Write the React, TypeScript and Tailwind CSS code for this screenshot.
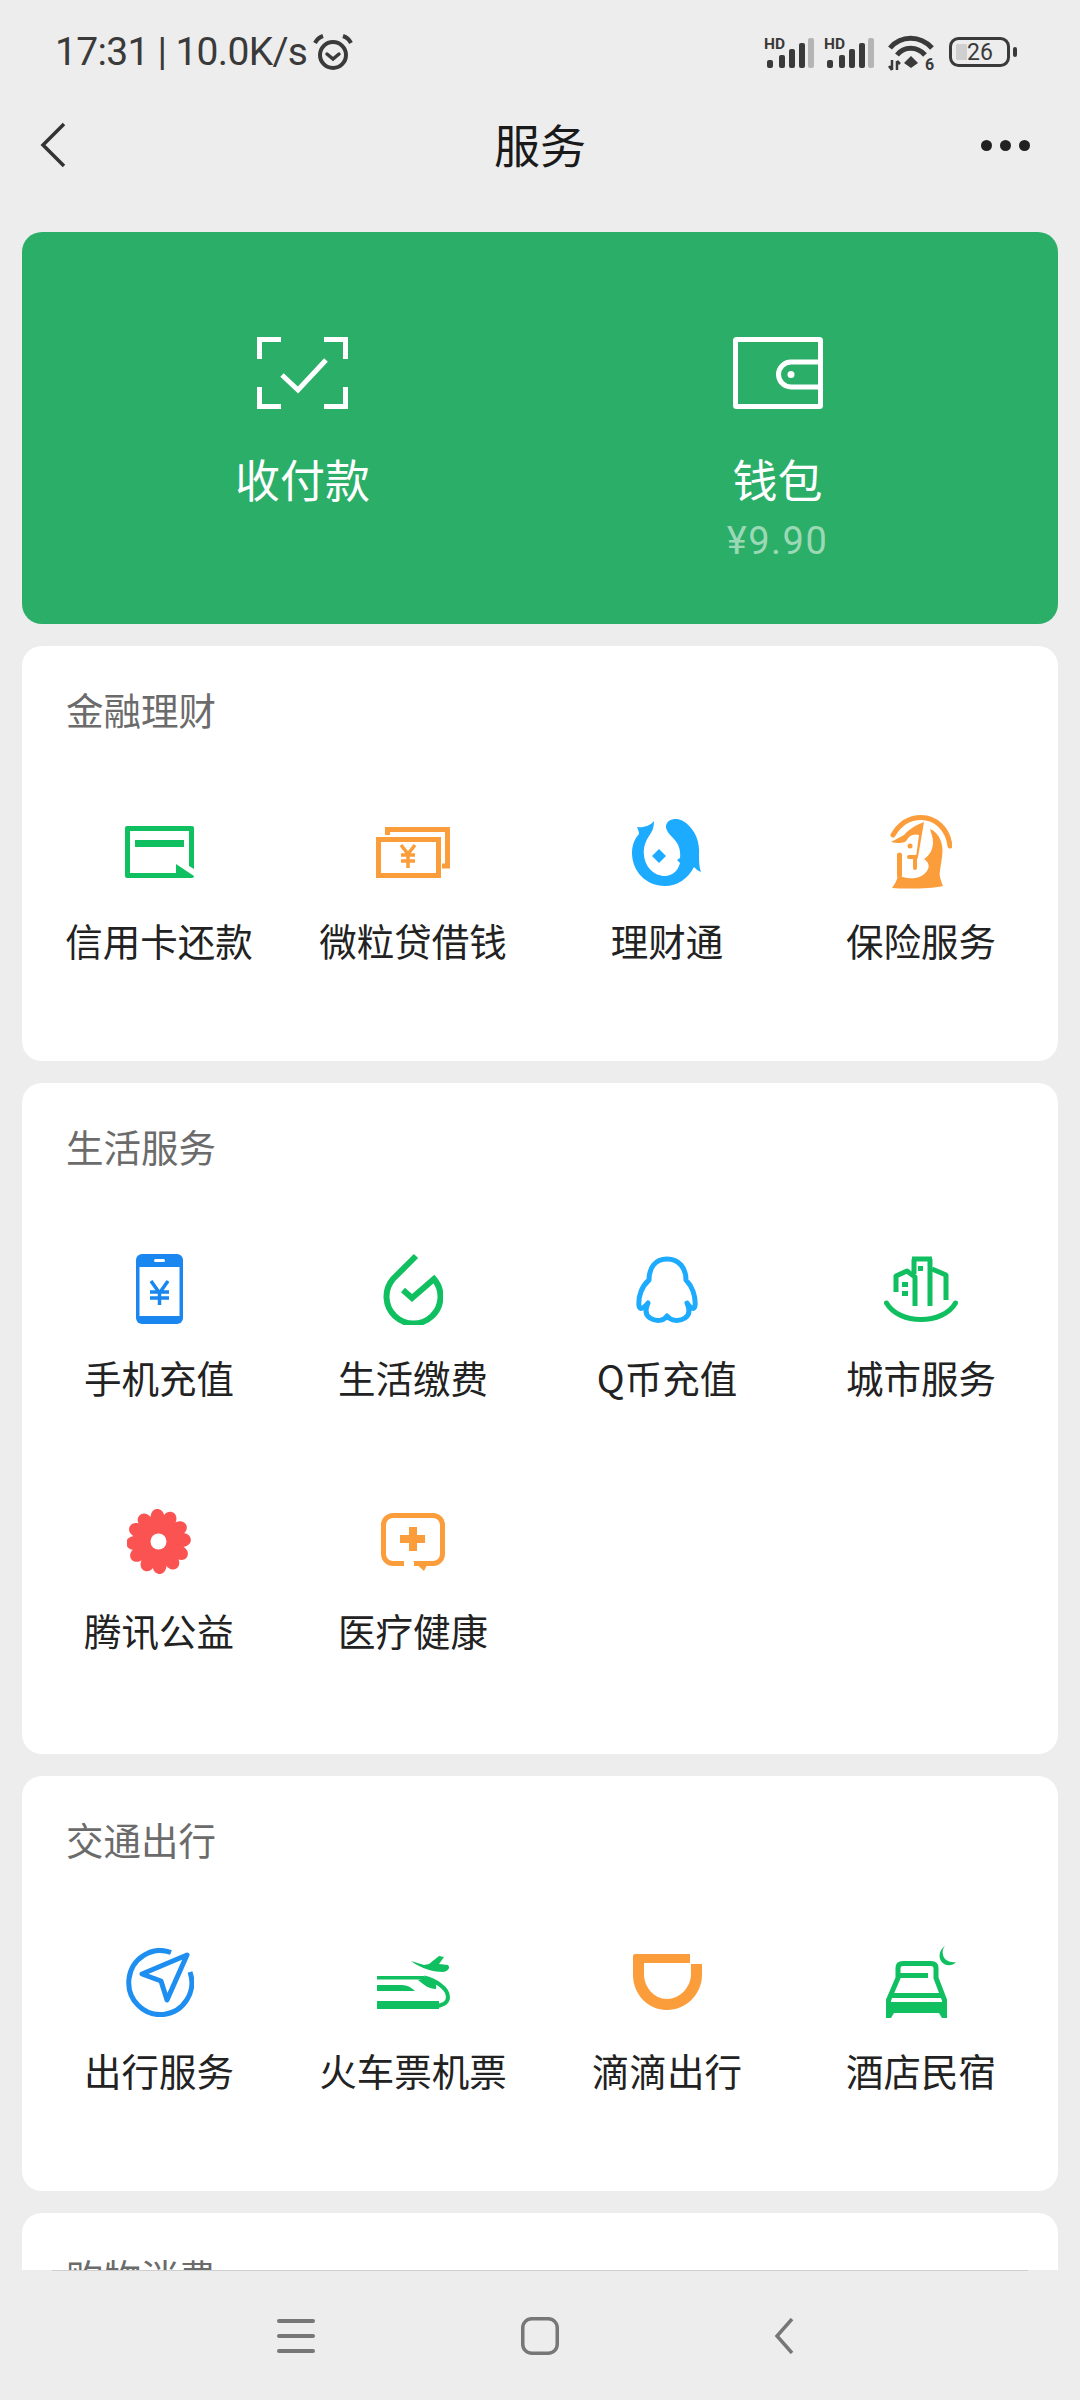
import React from 'react';

const GREEN = '#10c060';
const ORANGE = '#fb9d3b';
const SKY = '#1dabff';
const BLUE = '#1a86f0';

const CardIcon = () => (
  <svg width="69" height="52" viewBox="0 0 69 52">
    <path fill={GREEN} d="M2 0H67Q69 0 69 2V43L64 40V5H5V47H51V38L69 50Q69 52 67 52H2Q0 52 0 50V2Q0 0 2 0Z" />
    <rect x="10" y="14" width="49" height="7" fill={GREEN} />
  </svg>
);

const BillsIcon = () => (
  <svg width="74" height="51" viewBox="0 0 74 51" fill="none" stroke={ORANGE}>
    <path strokeWidth="5" d="M11.5 8V2.5H71.5V39H66" />
    <rect x="2.5" y="12.5" width="60" height="36" strokeWidth="5" />
    <path strokeWidth="3.5" d="M25 18L32 27L39 18M32 27V41M25 28H39M25 34H39" />
  </svg>
);

const LicaiIcon = () => (
  <svg width="70" height="67" viewBox="0 0 70 67">
    <path
      fill={SKY}
      d="M5 8C11 9 18 7 22 2C22 9 20 13 17 17C13 23 11 30 12 36C13 48 22 57 33 57C40 57 46 52 48 44L45 41L48 39C49 30 46 24 41 19C36 14 32 9 35 4C38 -1 46 -1 51 2C61 8 68 20 67 35C67 42 67 48 69 53C66 52 64 50 62 48C56 60 45 67 33 67C14 67 0 52 0 34C0 26 3 19 7 15C7 13 6 10 5 8Z"
    />
    <path fill={SKY} d="M27 30L34 37L27 44L20 37Z" />
  </svg>
);

const InsureIcon = () => (
  <svg width="62" height="74" viewBox="0 0 62 74">
    <g fill="none" stroke={ORANGE} strokeLinecap="round">
      <path strokeWidth="5" d="M3 20C10 8 20 2.5 31 2.5C46 2.5 58 14 60 31" />
      <path strokeWidth="5" d="M9.500 40V60" />
      <path strokeWidth="4" d="M19 42H26M25 43V53" />
    </g>
    <path fill={ORANGE} d="M1 27L14 20C18 15 26 10 34 7L28 42L26 42L29 20C23 18 18 22 17 25C15 28 10 29 1 27Z" />
    <circle cx="20" cy="31" r="2.500" fill={ORANGE} />
    <path
      fill={ORANGE}
      d="M40 14C50 18 54 30 52 42C51 51 49 58 50 62C51 66 52 69 53 71C40 74 15 74 2 73C4 70 7 66 8 60C14 64 30 66 37 56C41 50 37 46 34 44C40 40 43 34 43 27C43 22 41 18 40 14Z"
    />
  </svg>
);

const PhoneIcon = () => (
  <svg width="47" height="70" viewBox="0 0 47 70">
    <rect width="47" height="70" rx="6" fill={BLUE} />
    <rect x="3.500" y="13" width="40" height="49" fill="#fff" />
    <rect x="18" y="5" width="11" height="3" rx="1.500" fill="#fff" />
    <path fill="none" stroke={BLUE} strokeWidth="3.500" d="M15 27L23.500 39L32 27M23.500 39V51M14 38H33M14 44H33" />
  </svg>
);

const DropIcon = () => (
  <svg width="60" height="72" viewBox="0 0 60 72">
    <path fill="none" stroke={GREEN} strokeWidth="6" d="M33 3L10 26A27 27 0 1 0 51 26L29 45L20 37" />
  </svg>
);

const QQIcon = () => (
  <svg width="62" height="67" viewBox="0 0 62 67">
    <path
      fill="none"
      stroke={SKY}
      strokeWidth="5"
      strokeLinejoin="round"
      d="M31 3C19 3 13 12 13 24C6 30 2 40 3 50C4 54 7 53 12 47C9 54 9 59 14 62C20 66 28 65 31 60C35 65 43 66 49 62C54 59 54 54 51 47C55 53 58 54 59 50C60 40 56 30 50 24C50 12 43 3 31 3Z"
    />
  </svg>
);

const CityIcon = () => (
  <svg width="74" height="66" viewBox="0 0 74 66">
    <g fill="none" stroke={GREEN} strokeWidth="5" strokeLinejoin="round">
      <path strokeLinecap="round" d="M2.500 47C15 69 59 69 71.500 47" />
      <path d="M12 36V20L23 15L31 21V50" />
      <path d="M28 3H48M30 3V18M46 3V50" />
      <path d="M48 13L62 19V44" />
    </g>
    <g fill={GREEN}>
      <rect x="18" y="26" width="6" height="5" />
      <rect x="18" y="35" width="6" height="5" />
      <rect x="34" y="10" width="5" height="5" />
    </g>
  </svg>
);

const FlowerIcon = () => (
  <svg width="65" height="66" viewBox="0 0 65 66">
    <g fill="#fb5352" transform="translate(31.500 32.500)">
      <circle r="15" />
      {[12, 72, 132, 192, 252, 312].map((deg) => (
        <path
          key={deg}
          transform={`rotate(${deg})`}
          d="M0 -4C-4 -10 -13 -14 -13 -24C-13 -33 -3 -34 0 -27C3 -34 13 -33 13 -24C13 -14 4 -10 0 -4Z"
        />
      ))}
    </g>
    <circle cx="31.500" cy="32.500" r="8" fill="#fff" />
  </svg>
);

const MedicalIcon = () => (
  <svg width="64" height="58" viewBox="0 0 64 58">
    <path
      fill="none"
      stroke={ORANGE}
      strokeWidth="5"
      d="M23 50.500H12A9.500 9.500 0 0 1 2.500 41V12A9.500 9.500 0 0 1 12 2.500H52A9.500 9.500 0 0 1 61.500 12V41A9.500 9.500 0 0 1 52 50.500H33"
    />
    <path fill={ORANGE} d="M32 48H48L43 58Z" />
    <path fill={ORANGE} d="M28 14H36V22H44V30H36V38H28V30H19V22H28Z" />
  </svg>
);

const CompassIcon = () => (
  <svg width="69" height="69" viewBox="0 0 69 69" fill="none" stroke="#1e8ff0" strokeWidth="5">
    <path d="M46 4.500A31.500 32 0 1 0 65 24" />
    <path strokeLinejoin="round" d="M62 7L17 26L36 33L42 52Z" />
  </svg>
);

const TrainIcon = () => (
  <svg width="73" height="53" viewBox="0 0 73 53">
    <g fill={GREEN}>
      <path d="M34 5L47 9L52 8L62 0L67 1L62 8L71 9C74 12 70 16 66 16C58 16 44 13 34 5Z" />
      <path d="M0 20H47V23.500H0Z" />
      <path d="M0 29H25C30 29 34 31 38 35H0Z" />
      <path d="M41 24L52 21C58 24 60 29 59 33C52 33 47 29 41 24Z" />
      <path d="M0 45H62V53H0Z" />
    </g>
    <path fill="none" stroke={GREEN} strokeWidth="4" d="M47 21.500C58 24 71 32 71 41C71 46 67 49 60 50" />
  </svg>
);

const DidiIcon = () => (
  <svg width="69" height="56" viewBox="0 0 69 56">
    <path
      fill={ORANGE}
      d="M0 2Q0 0 2 0H57V9H11V20C11 33 21 45 34 45C47 45 58 33 58 20V10H69V21C69 40 53 56 34 56C15 56 0 40 0 21Z"
    />
  </svg>
);

const BedIcon = () => (
  <svg width="70" height="72" viewBox="0 0 70 72">
    <path fill={GREEN} d="M59 0C54 3 52 10 55 15C58 20 66 21 70 16C64 17 58 14 57 9C56 5 57 2 59 0Z" />
    <path
      fill="none"
      stroke={GREEN}
      strokeWidth="5"
      d="M2.500 72V54L12 32V22Q12 17.500 17 17.500H45Q50 17.500 50 22V32L58.500 54V72"
    />
    <rect x="13" y="27" width="29" height="5" fill={GREEN} />
    <rect x="5" y="47" width="51" height="5" fill={GREEN} />
    <path fill={GREEN} d="M0 56H61V72H56L53 67H8L5 72H0Z" />
  </svg>
);

const ScanIcon = () => (
  <svg width="91" height="72" viewBox="0 0 91 72" fill="none" stroke="#fff" strokeWidth="5">
    <path d="M2.500 22V2.500H24M67 2.500H88.500V22M2.500 50V69.500H24M67 69.500H88.500V50" />
    <path d="M25 38L41 53L69 23" />
  </svg>
);

const WalletIcon = () => (
  <svg width="90" height="72" viewBox="0 0 90 72" fill="none" stroke="#fff" strokeWidth="5">
    <rect x="2.500" y="2.500" width="85" height="67" rx="1" />
    <path d="M88 25H58A12.500 12.500 0 0 0 58 50H88" />
    <circle cx="58" cy="37.500" r="3.500" fill="#fff" stroke="none" />
  </svg>
);

const SignalIcon = () => (
  <svg width="51" height="31" viewBox="0 0 51 31" className="overflow-visible">
    <text x="0" y="11.500" fontSize="15.500" fontWeight="700" fill="#3a3a3a" fontFamily="Roboto, sans-serif">
      HD
    </text>
    <g fill="#3a3a3a">
      <rect x="3" y="23" width="6" height="8" rx="2" />
      <rect x="15" y="18" width="6" height="13" rx="2" />
      <rect x="25" y="12" width="6" height="19" rx="2" />
      <rect x="35" y="6" width="6" height="25" rx="2" />
    </g>
    <rect x="44" y="1" width="6" height="30" rx="2" fill="#b5b5b5" />
  </svg>
);

const WifiIcon = () => (
  <svg width="48" height="35" viewBox="0 0 48 35" className="overflow-visible">
    <g fill="none" stroke="#3a3a3a" strokeWidth="5">
      <path d="M3 13C14 0 33 0 45 13" />
      <path d="M10 20C17 11 30 11 38 20" />
    </g>
    <path fill="#3a3a3a" d="M24 21L31 28L24 33L17 28Z" />
    <path stroke="#3a3a3a" strokeWidth="2.500" fill="none" d="M5 25V35M2 31L5 35M10 26V35M10 26L13 29" />
    <text x="38" y="35" fontSize="16" fontWeight="700" fill="#3a3a3a" fontFamily="Roboto, sans-serif">
      6
    </text>
  </svg>
);

const BatteryIcon = () => (
  <svg width="70" height="30" viewBox="0 0 70 30" className="overflow-visible">
    <rect x="7" y="7" width="11" height="16" rx="1" fill="#cfcfcf" />
    <rect x="1.500" y="1.500" width="58" height="27" rx="8" fill="none" stroke="#3a3a3a" strokeWidth="3" />
    <rect x="64" y="10" width="4" height="10" rx="2" fill="#3a3a3a" />
    <text x="31" y="23" textAnchor="middle" fontSize="23" fill="#3a3a3a" fontFamily="Roboto, sans-serif">
      26
    </text>
  </svg>
);

const AlarmIcon = () => (
  <svg width="40" height="37" viewBox="0 0 40 37" fill="none" stroke="#3a3a3a">
    <circle cx="20" cy="21" r="13" strokeWidth="4" />
    <path strokeWidth="4" d="M2 9C4 5 7 3 10 2M38 9C36 5 33 3 30 2" />
    <path strokeWidth="3.500" strokeLinecap="round" d="M14 20L20 25L26 20" />
  </svg>
);

const sections = [
  {
    title: '金融理财',
    bottom: 'pb-[73px]',
    items: [
      { label: '信用卡还款', icon: <CardIcon /> },
      { label: '微粒贷借钱', icon: <BillsIcon /> },
      { label: '理财通', icon: <LicaiIcon /> },
      { label: '保险服务', icon: <InsureIcon /> },
    ],
  },
  {
    title: '生活服务',
    bottom: 'pb-[76px]',
    items: [
      { label: '手机充值', icon: <PhoneIcon /> },
      { label: '生活缴费', icon: <DropIcon /> },
      { label: 'Q币充值', icon: <QQIcon /> },
      { label: '城市服务', icon: <CityIcon /> },
      { label: '腾讯公益', icon: <FlowerIcon /> },
      { label: '医疗健康', icon: <MedicalIcon /> },
    ],
  },
  {
    title: '交通出行',
    bottom: 'pb-[73px]',
    items: [
      { label: '出行服务', icon: <CompassIcon /> },
      { label: '火车票机票', icon: <TrainIcon /> },
      { label: '滴滴出行', icon: <DidiIcon /> },
      { label: '酒店民宿', icon: <BedIcon /> },
    ],
  },
];

const App: React.FC = () => {
  return (
    <div className="h-[2400px] flex flex-col overflow-hidden bg-[#ededed] [font-family:'Noto_Sans_CJK_SC',sans-serif]">
      {/* Status bar */}
      <div className="h-[100px] shrink-0 flex items-center justify-between pl-[55px] pr-[61px] pt-[4px] text-[#3a3a3a]">
        <div className="flex items-center gap-[6px]">
          <span className="text-[39px] leading-[44px] tracking-[-0.7px] [font-family:Roboto,sans-serif]">
            17:31 | 10.0K/s
          </span>
          <AlarmIcon />
        </div>
        <div className="flex items-center gap-[9px]">
          <SignalIcon />
          <SignalIcon />
          <div className="ml-[3px] mr-[5px]">
            <WifiIcon />
          </div>
          <BatteryIcon />
        </div>
      </div>

      {/* Header */}
      <div className="h-[90px] shrink-0 grid grid-cols-3 items-center pl-[40px] pr-[50px]">
        <svg width="26" height="46" viewBox="0 0 26 46" fill="none" stroke="#333" strokeWidth="3.500">
          <path d="M24 2L3 23L24 44" />
        </svg>
        <h1 className="text-center pl-[10px] text-[46px] leading-[56px] pb-[4px] text-[#1a1a1a]">服务</h1>
        <div className="flex items-center justify-end gap-[8px]">
          <div className="w-[11px] h-[11px] rounded-full bg-[#222]" />
          <div className="w-[11px] h-[11px] rounded-full bg-[#222]" />
          <div className="w-[11px] h-[11px] rounded-full bg-[#222]" />
        </div>
      </div>

      {/* Content */}
      <div className="flex-1 min-h-0 overflow-hidden px-[22px] pt-[42px]">
        <div className="h-[392px] rounded-[20px] bg-[#2bae68] grid grid-cols-2 px-[43px] pt-[105px] text-white">
          <div className="flex flex-col items-center">
            <ScanIcon />
            <div className="mt-[45px] text-[45px] leading-[50px]">收付款</div>
          </div>
          <div className="flex flex-col items-center">
            <WalletIcon />
            <div className="mt-[45px] text-[45px] leading-[50px]">钱包</div>
            <div className="mt-[15px] text-[38px] leading-[44px] tracking-[1.5px] text-[#9bd8b5] [font-family:Roboto,sans-serif]">
              ¥9.90
            </div>
          </div>
        </div>

        {sections.map((section) => (
          <div key={section.title} className={`mt-[22px] rounded-[20px] bg-white pt-[38px] ${section.bottom}`}>
            <div className="pl-[44px] text-[37.500px] leading-[50px] text-[#6b6b6b]">{section.title}</div>
            <div className="grid grid-cols-4 px-[10px] pt-[1px]">
              {section.items.map((item) => (
                <div key={item.label} className="h-[253px] flex flex-col items-center pt-[77px]">
                  <div className="h-[80px] flex items-center justify-center">{item.icon}</div>
                  <div className="mt-[23px] text-[37.500px] leading-[50px] text-[#222]">{item.label}</div>
                </div>
              ))}
            </div>
          </div>
        ))}

        <div className="mt-[22px] rounded-[20px] bg-white pt-[38px] h-[200px]">
          <div className="pl-[44px] text-[37.500px] leading-[50px] text-[#6b6b6b]">购物消费</div>
        </div>
      </div>

      {/* Bottom nav */}
      <div className="h-[130px] shrink-0 bg-[#ededed]">
        <div className="h-px mx-[52px] bg-[#cfcfcf]" />
        <div className="h-[129px] w-[732px] mx-auto grid grid-cols-3 items-center justify-items-center">
          <svg width="38" height="36" viewBox="0 0 38 36" fill="#777">
            <rect y="1" width="38" height="4" rx="2" />
            <rect y="16" width="38" height="4" rx="2" />
            <rect y="31" width="38" height="4" rx="2" />
          </svg>
          <svg width="38" height="38" viewBox="0 0 38 38" fill="none" stroke="#777" strokeWidth="3.500">
            <rect x="1.750" y="1.750" width="34.500" height="34.500" rx="9" />
          </svg>
          <svg width="20" height="36" viewBox="0 0 20 36" fill="none" stroke="#777" strokeWidth="3.500">
            <path d="M18 1L3 18L18 35" />
          </svg>
        </div>
      </div>
    </div>
  );
};

export default App;
